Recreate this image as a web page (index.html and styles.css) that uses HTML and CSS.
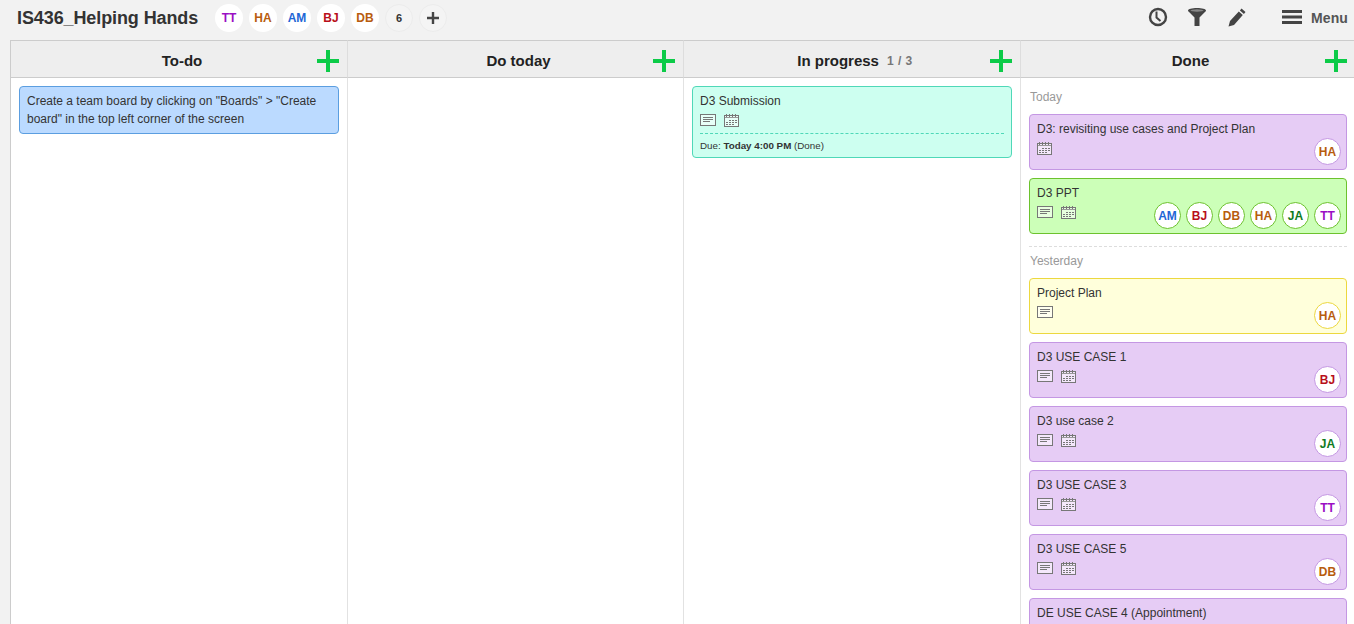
FILE: index.html
```html
<!DOCTYPE html>
<html lang="en">
<head>
<meta charset="utf-8" />
<title>IS436_Helping Hands</title>
<link rel="stylesheet" href="styles.css">
</head>
<body>
<svg class="defs" width="0" height="0">
  <symbol id="i-note" viewBox="0 0 16 12">
    <rect x="0.5" y="0.5" width="15" height="11" fill="#fff" fill-opacity=".55" stroke="#777" />
    <path d="M3 3.500h10M3 5.500h10M3 7.500h7" stroke="#777" fill="none" />
  </symbol>
  <symbol id="i-cal" viewBox="0 0 15 13">
    <rect x="0.5" y="1.500" width="14" height="11" fill="#fff" fill-opacity=".55" stroke="#777" />
    <path d="M2.500 0v3M5.500 0v3M8.500 0v3M11.500 0v3" stroke="#777" fill="none" />
    <path d="M1 3.500h13" stroke="#999" fill="none" />
    <path d="M5 6h2v1H5zM8 6h2v1H8zM11 6h2v1h-2zM2 8h2v1H2zM5 8h2v1H5zM8 8h2v1H8zM11 8h2v1h-2zM2 10h2v1H2zM5 10h2v1H5zM8 10h2v1H8z" fill="#777" />
  </symbol>
  <symbol id="i-plus" viewBox="0 0 22 22">
    <path d="M9 0h4v9h9v4h-9v9H9v-9H0V9h9z" fill="#0ccb48" />
  </symbol>
</svg>

<div class="topbar">
  <h1 class="board-name">IS436_Helping Hands</h1>
  <div class="members">
    <span class="face c-tt">TT</span>
    <span class="face c-ha">HA</span>
    <span class="face c-am">AM</span>
    <span class="face c-bj">BJ</span>
    <span class="face c-db">DB</span>
    <span class="face more">6</span>
    <span class="face more">
      <svg width="12" height="12" viewBox="0 0 12 12"><path d="M4.800 0h2.400v4.800H12v2.400H7.200V12H4.800V7.200H0V4.800h4.800z" fill="#444" /></svg>
    </span>
  </div>
  <div class="tools">
    <svg class="tool-clock" width="20" height="20" viewBox="0 0 20 20"><circle cx="10" cy="10" r="8" fill="none" stroke="#444" stroke-width="2.400" /><path d="M8.500 4.500v6l4 3.500" fill="none" stroke="#444" stroke-width="2" /></svg>
    <svg class="tool-filter" width="18" height="18" viewBox="0 0 18 18"><path d="M0 2.500C0 1 4 0 9 0s9 1 9 2.500c0 .5-.3.900-.8 1.300L11.500 9.500V18h-5V9.500L.8 3.800C.3 3.400 0 3 0 2.500z" fill="#444" /><ellipse cx="9" cy="2.500" rx="6.500" ry="1.200" fill="#888" /></svg>
    <svg class="tool-pen" width="18" height="19" viewBox="0 0 18 19"><path d="M13.500 0.500l4 3.500-1.600 2-4-3.500zM10.800 3.500l4 3.500L6 17 0.500 18.500l1.500-5.500z" fill="#444" /></svg>
    <svg class="tool-menu" width="20" height="14" viewBox="0 0 20 14"><path d="M0 0h20v3H0zM0 5.500h20v3H0zM0 11h20v3H0z" fill="#444" /></svg>
    <span class="menu-label">Menu</span>
  </div>
</div>

<div class="board">
  <div class="col">
    <div class="col-head">
      <span class="col-title">To-do</span>
      <svg class="add" width="22" height="22"><use href="#i-plus" /></svg>
    </div>
    <div class="col-body">
      <div class="task blue">
        <div class="task-title">Create a team board by clicking on "Boards" &gt; "Create board" in the top left corner of the screen</div>
      </div>
    </div>
  </div>

  <div class="col">
    <div class="col-head">
      <span class="col-title">Do today</span>
      <svg class="add" width="22" height="22"><use href="#i-plus" /></svg>
    </div>
    <div class="col-body"></div>
  </div>

  <div class="col">
    <div class="col-head">
      <span class="col-title">In progress</span>
      <span class="col-limit">1 / 3</span>
      <svg class="add" width="22" height="22"><use href="#i-plus" /></svg>
    </div>
    <div class="col-body">
      <div class="task teal">
        <div class="task-title">D3 Submission</div>
        <div class="task-icons short">
          <svg width="16" height="12"><use href="#i-note" /></svg>
          <svg width="15" height="13"><use href="#i-cal" /></svg>
        </div>
        <div class="task-due">Due: <b>Today 4:00 PM</b> (Done)</div>
      </div>
    </div>
  </div>

  <div class="col last">
    <div class="col-head">
      <span class="col-title">Done</span>
      <svg class="add" width="22" height="22"><use href="#i-plus" /></svg>
    </div>
    <div class="col-body">
      <div class="day">Today</div>
      <div class="task purple">
        <div class="task-title">D3: revisiting use cases and Project Plan</div>
        <div class="task-icons">
          <svg width="15" height="13"><use href="#i-cal" /></svg>
        </div>
        <div class="owners"><span class="face c-ha">HA</span></div>
      </div>
      <div class="task green">
        <div class="task-title">D3 PPT</div>
        <div class="task-icons">
          <svg width="16" height="12"><use href="#i-note" /></svg>
          <svg width="15" height="13"><use href="#i-cal" /></svg>
        </div>
        <div class="owners">
          <span class="face c-am">AM</span>
          <span class="face c-bj">BJ</span>
          <span class="face c-db">DB</span>
          <span class="face c-ha">HA</span>
          <span class="face c-ja">JA</span>
          <span class="face c-tt">TT</span>
        </div>
      </div>
      <div class="day-line"></div>
      <div class="day">Yesterday</div>
      <div class="task yellow">
        <div class="task-title">Project Plan</div>
        <div class="task-icons">
          <svg width="16" height="12"><use href="#i-note" /></svg>
        </div>
        <div class="owners"><span class="face c-ha">HA</span></div>
      </div>
      <div class="task purple">
        <div class="task-title">D3 USE CASE 1</div>
        <div class="task-icons">
          <svg width="16" height="12"><use href="#i-note" /></svg>
          <svg width="15" height="13"><use href="#i-cal" /></svg>
        </div>
        <div class="owners"><span class="face c-bj">BJ</span></div>
      </div>
      <div class="task purple">
        <div class="task-title">D3 use case 2</div>
        <div class="task-icons">
          <svg width="16" height="12"><use href="#i-note" /></svg>
          <svg width="15" height="13"><use href="#i-cal" /></svg>
        </div>
        <div class="owners"><span class="face c-ja">JA</span></div>
      </div>
      <div class="task purple">
        <div class="task-title">D3 USE CASE 3</div>
        <div class="task-icons">
          <svg width="16" height="12"><use href="#i-note" /></svg>
          <svg width="15" height="13"><use href="#i-cal" /></svg>
        </div>
        <div class="owners"><span class="face c-tt">TT</span></div>
      </div>
      <div class="task purple">
        <div class="task-title">D3 USE CASE 5</div>
        <div class="task-icons">
          <svg width="16" height="12"><use href="#i-note" /></svg>
          <svg width="15" height="13"><use href="#i-cal" /></svg>
        </div>
        <div class="owners"><span class="face c-db">DB</span></div>
      </div>
      <div class="task purple">
        <div class="task-title">DE USE CASE 4 (Appointment)</div>
      </div>
    </div>
  </div>
</div>
</body>
</html>
```

FILE: styles.css
```css
*{margin:0; padding:0; box-sizing:border-box;}
html, body{height:100%; overflow:hidden;}
body{font:12px/18px "Liberation Sans", Arial, sans-serif; color:#333; background:#f2f2f2;}
.defs{display:block; height:0;}

/* top bar */
.topbar{height:40px; display:flex; align-items:center; padding:0 6px 4px 17px;}
.board-name{font-size:18px; line-height:28px; font-weight:bold; color:#333; width:198px; letter-spacing:-.1px;}
.members{display:flex; gap:6px;}
.face{width:28px; height:28px; border-radius:50%; background:#fff; display:flex; align-items:center; justify-content:center; font-size:12px; font-weight:bold;}
.face.more{background:#f4f4f4; border:1px solid #ececec; color:#333; font-size:11px;}
.c-tt{color:#9a0fc4;}
.c-ha{color:#b85c0e;}
.c-am{color:#1e66d6;}
.c-bj{color:#b80f1a;}
.c-db{color:#b85c0e;}
.c-ja{color:#0f7a1e;}
.tools{margin-left:auto; display:flex; align-items:center;}
.tools svg{margin-bottom:2px;}
.tool-filter{margin-left:20px;}
.tool-pen{margin-left:22px;}
.tool-menu{margin-left:36px;}
.menu-label{margin-left:9px; font-size:14px; font-weight:bold; color:#555; letter-spacing:.1px;}

/* board */
.board{margin-left:10px; height:584px; display:grid; grid-template-columns:337px 336px 337px 333px; background:#fff; border-left:1px solid #ccc; overflow:hidden;}
.col{border-right:1px solid #e2e2e2; min-width:0; height:100%;}
.col.last{border-right:none;}
.col-head{height:38px; position:relative; display:flex; align-items:center; justify-content:center; gap:8px; padding:4px 0 0 6px; background:#eee; border-top:1px solid #ccc; border-bottom:1px solid #ccc; border-right:1px solid #ddd; margin-right:-1px;}
.col-title{font-size:15px; font-weight:bold; color:#222;}
.col-limit{font-size:12px; font-weight:bold; color:#777; letter-spacing:.5px;}
.add{position:absolute; right:8px; top:9px;}
.col.last .add{right:7px;}
.col-body{padding:8px 8px 0 8px;}
.col.last .col-body{padding-right:7px;}

/* cards */
.task{position:relative; border:1px solid; border-radius:4px; padding:5px 7px; margin-bottom:8px;}
.task-title{color:#333;}
.task-icons{height:26px; display:flex; gap:8px; align-items:flex-start; padding-top:4px;}
.task-icons.short{height:22px;}
.task-due{border-top:1px dashed #4fd8b8; font-size:9.800px; line-height:14px; padding-top:5px; margin:1px 0 -1px;}
.owners{position:absolute; right:5px; bottom:4px; display:flex; gap:5px;}
.owners .face{width:27px; height:27px; border:1px solid;}
.blue{background:#bbdaff; border-color:#5b9ee0;}
.teal{background:#cdfff0; border-color:#4fd8b8;}
.purple{background:#e6ccf5; border-color:#c497e3;}
.purple .face{border-color:#c497e3;}
.green{background:#ccffb8; border-color:#6cc22d;}
.green .face{border-color:#6cc22d;}
.yellow{background:#ffffdb; border-color:#ecd83f;}
.yellow .face{border-color:#ecd83f;}

/* day separators */
.day{color:#999; height:20px; padding-left:1px; line-height:22px; margin-bottom:8px;}
.day-line{border-top:1px dashed #ddd; margin:12px 0 3px;}
```
